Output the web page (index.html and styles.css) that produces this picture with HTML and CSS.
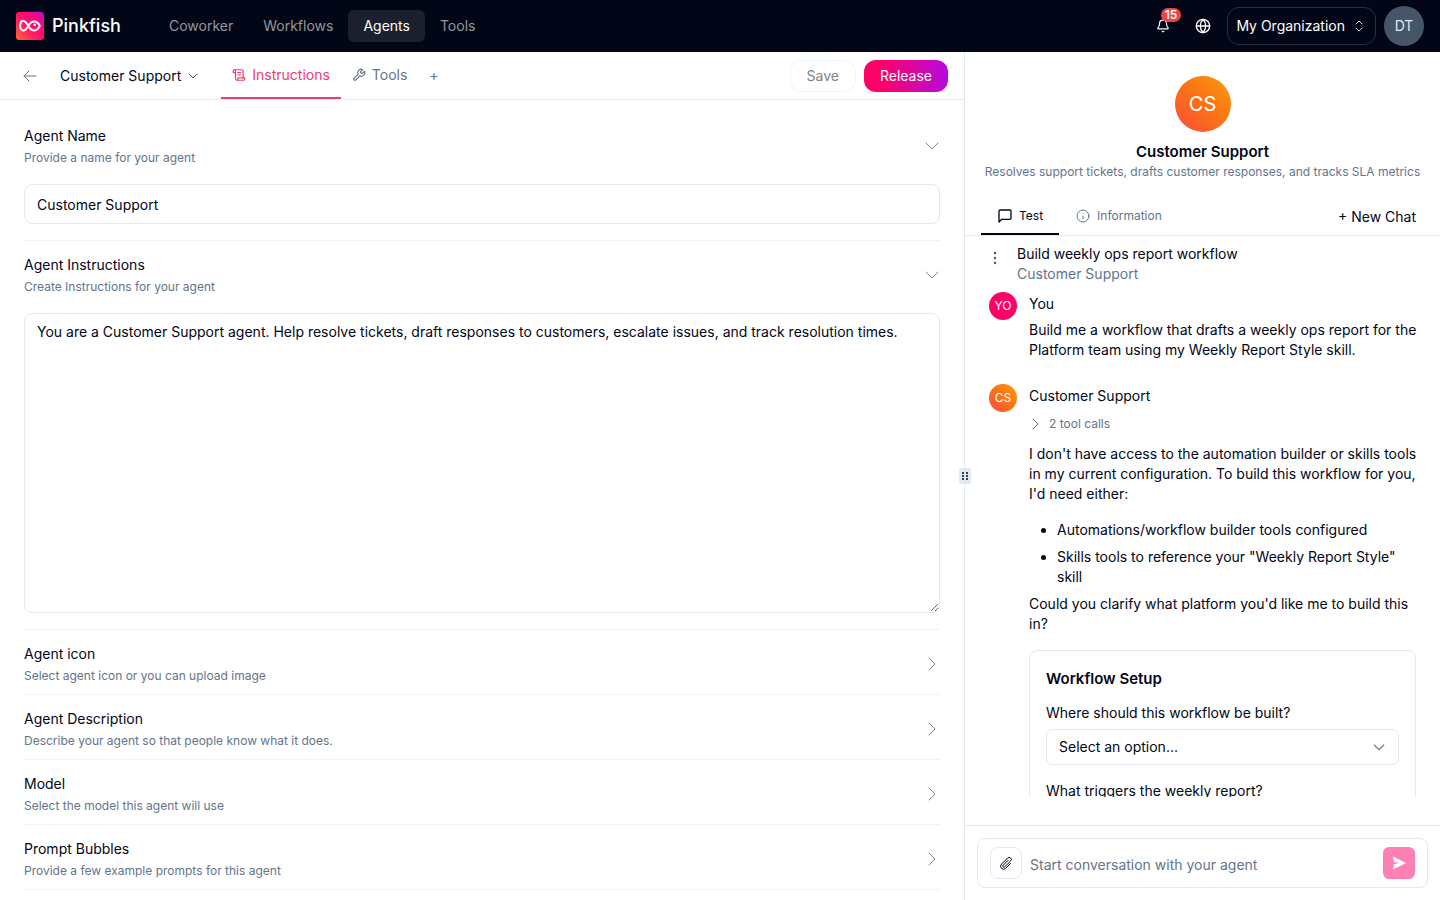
FILE: index.html
```html
<!DOCTYPE html>
<html lang="en">

<head>
  <meta charset="UTF-8">
  <meta name="viewport" content="width=device-width, initial-scale=1.0">
  <title>Pinkfish - Agents</title>
  <link rel="stylesheet" href="styles.css">
</head>

<body>
  <header class="navbar">
    <a class="brand" href="#">
      <svg class="logo" viewBox="0 0 28 28" width="28" height="28">
        <defs>
          <linearGradient id="logo-fill" x1="0" y1="1" x2="1" y2="0">
            <stop offset="0" stop-color="#ff6a3c" />
            <stop offset="0.45" stop-color="#ff1464" />
            <stop offset="0.7" stop-color="#fa0a78" />
            <stop offset="1" stop-color="#b40ad2" />
          </linearGradient>
        </defs>
        <rect width="28" height="28" rx="3" fill="url(#logo-fill)" />
        <path d="M4.6 9.8C8 7.6 10.600 10.600 12.200 13.700C13.600 16.500 15.600 18.400 18.400 18.400C21 18.400 22.600 16.400 23.800 13.900C22.600 11.400 21 9.400 18.400 9.400C15.600 9.400 13.600 11.300 12.200 14.100C10.600 17.200 8 20 5.200 17.600C4 15.500 4 12 5.200 10" fill="none" stroke="#fff" stroke-width="2" stroke-linejoin="round" />
        <circle cx="18.800" cy="12.800" r="1.200" fill="#fff" />
      </svg>
      <span>Pinkfish</span>
    </a>
    <nav class="main-nav">
      <a href="#">Coworker</a>
      <a href="#">Workflows</a>
      <a href="#" class="active">Agents</a>
      <a href="#">Tools</a>
    </nav>
    <div class="nav-right">
      <button class="icon-btn" aria-label="Notifications">
        <svg class="icon" viewBox="0 0 24 24" width="14" height="14">
          <path d="M10.3 21a2 2 0 0 0 3.4 0" />
          <path d="M3.3 15.3A1 1 0 0 0 4 17h16a1 1 0 0 0 .7-1.7C19.4 14 18 12.5 18 8A6 6 0 0 0 6 8c0 4.5-1.4 6-2.7 7.3" />
        </svg>
        <span class="badge">15</span>
      </button>
      <button class="icon-btn" aria-label="Language">
        <svg class="icon" viewBox="0 0 24 24" width="16" height="16">
          <circle cx="12" cy="12" r="10" />
          <path d="M12 2a14.5 14.5 0 0 0 0 20 14.5 14.5 0 0 0 0-20M2 12h20" />
        </svg>
      </button>
      <button class="org-btn">
        <span>My Organization</span>
        <svg class="icon" viewBox="0 0 16 16" width="16" height="16">
          <path d="m5 10 3 3 3-3M5 6l3-3 3 3" />
        </svg>
      </button>
      <button class="avatar user-avatar">DT</button>
    </div>
  </header>

  <main class="layout">
    <section class="editor">
      <div class="toolbar">
        <button class="back" aria-label="Back">
          <svg class="icon thin" viewBox="0 0 16 16" width="16" height="16">
            <path d="M14 8H2M7 3 2 8l5 5" />
          </svg>
        </button>
        <button class="agent-switch">
          <span>Customer Support</span>
          <svg class="icon" viewBox="0 0 24 24" width="12" height="12">
            <path d="m4 8 8 8 8-8" />
          </svg>
        </button>
        <div class="tabs">
          <button class="tab active">
            <svg class="icon" viewBox="0 0 24 24" width="14" height="14">
              <path d="M15 12h-5M15 8h-5M19 17V5a2 2 0 0 0-2-2H4" />
              <path d="M8 21h12a2 2 0 0 0 2-2v-1a1 1 0 0 0-1-1H11a1 1 0 0 0-1 1v1a2 2 0 1 1-4 0V5a2 2 0 1 0-4 0v2a1 1 0 0 0 1 1h3" />
            </svg>
            <span>Instructions</span>
          </button>
          <button class="tab">
            <svg class="icon" viewBox="0 0 24 24" width="14" height="14">
              <path d="M14.7 6.3a1 1 0 0 0 0 1.4l1.6 1.6a1 1 0 0 0 1.4 0l3.77-3.77a6 6 0 0 1-7.94 7.94l-6.91 6.91a2.12 2.12 0 0 1-3-3l6.91-6.91a6 6 0 0 1 7.94-7.94z" />
            </svg>
            <span>Tools</span>
          </button>
          <button class="tab">+</button>
        </div>
        <div class="actions">
          <button class="save">Save</button>
          <button class="release">Release</button>
        </div>
      </div>

      <div class="sections">
        <div class="section">
          <button class="section-head">
            <span class="section-text">
              <span class="title" id="name-label">Agent Name</span>
              <span class="hint">Provide a name for your agent</span>
            </span>
            <svg class="icon chevron" viewBox="0 0 16 16" width="16" height="16"><path d="m2 5 6 6 6-6" /></svg>
          </button>
          <input class="field" type="text" value="Customer Support" aria-labelledby="name-label">
        </div>
        <div class="section">
          <button class="section-head">
            <span class="section-text">
              <span class="title" id="instructions-label">Agent Instructions</span>
              <span class="hint">Create Instructions for your agent</span>
            </span>
            <svg class="icon chevron" viewBox="0 0 16 16" width="16" height="16"><path d="m2 5 6 6 6-6" /></svg>
          </button>
          <textarea class="field area" aria-labelledby="instructions-label">You are a Customer Support agent. Help resolve tickets, draft responses to customers, escalate issues, and track resolution times.</textarea>
        </div>
        <div class="section">
          <button class="section-head">
            <span class="section-text">
              <span class="title">Agent icon</span>
              <span class="hint">Select agent icon or you can upload image</span>
            </span>
            <svg class="icon chevron" viewBox="0 0 16 16" width="16" height="16"><path d="m5 2 6 6-6 6" /></svg>
          </button>
        </div>
        <div class="section">
          <button class="section-head">
            <span class="section-text">
              <span class="title">Agent Description</span>
              <span class="hint">Describe your agent so that people know what it does.</span>
            </span>
            <svg class="icon chevron" viewBox="0 0 16 16" width="16" height="16"><path d="m5 2 6 6-6 6" /></svg>
          </button>
        </div>
        <div class="section">
          <button class="section-head">
            <span class="section-text">
              <span class="title">Model</span>
              <span class="hint">Select the model this agent will use</span>
            </span>
            <svg class="icon chevron" viewBox="0 0 16 16" width="16" height="16"><path d="m5 2 6 6-6 6" /></svg>
          </button>
        </div>
        <div class="section">
          <button class="section-head">
            <span class="section-text">
              <span class="title">Prompt Bubbles</span>
              <span class="hint">Provide a few example prompts for this agent</span>
            </span>
            <svg class="icon chevron" viewBox="0 0 16 16" width="16" height="16"><path d="m5 2 6 6-6 6" /></svg>
          </button>
        </div>
      </div>
    </section>

    <aside class="preview">
      <div class="resize-handle">
        <svg viewBox="0 0 12 16" width="12" height="16">
          <path d="M3 4h2v2H3zM7 4h2v2H7zM3 7h2v2H3zM7 7h2v2H7zM3 10h2v2H3zM7 10h2v2H7z" />
        </svg>
      </div>
      <div class="agent-card">
        <div class="avatar agent-avatar">CS</div>
        <h1>Customer Support</h1>
        <p>Resolves support tickets, drafts customer responses, and tracks SLA metrics</p>
      </div>
      <div class="chat-tabs">
        <button class="chat-tab active">
          <svg class="icon" viewBox="0 0 24 24" width="16" height="16">
            <path d="M21 15a2 2 0 0 1-2 2H7l-4 4V5a2 2 0 0 1 2-2h14a2 2 0 0 1 2 2z" />
          </svg>
          <span>Test</span>
        </button>
        <button class="chat-tab">
          <svg class="icon" viewBox="0 0 16 16" width="16" height="16">
            <circle cx="8" cy="8" r="6" />
            <path d="M8 11V8M8 5v.2" />
          </svg>
          <span>Information</span>
        </button>
        <button class="new-chat">+ New Chat</button>
      </div>

      <div class="chat">
        <div class="chat-head">
          <button class="dots" aria-label="Chat options">
            <svg viewBox="0 0 16 16" width="16" height="16">
              <circle cx="8" cy="3" r="1.2" />
              <circle cx="8" cy="8" r="1.2" />
              <circle cx="8" cy="13" r="1.2" />
            </svg>
          </button>
          <div>
            <p>Build weekly ops report workflow</p>
            <p class="muted">Customer Support</p>
          </div>
        </div>

        <div class="message">
          <div class="avatar small you">YO</div>
          <div class="message-body">
            <p class="author">You</p>
            <p>Build me a workflow that drafts a weekly ops report for the Platform team using my Weekly Report Style skill.</p>
          </div>
        </div>

        <div class="message">
          <div class="avatar small agent">CS</div>
          <div class="message-body">
            <p class="author">Customer Support</p>
            <button class="tool-calls">
              <svg class="icon" viewBox="0 0 12 12" width="12" height="12"><path d="m4 1 5 5-5 5" /></svg>
              <span>2 tool calls</span>
            </button>
            <p>I don't have access to the automation builder or skills tools in my current configuration. To build this workflow for you, I'd need either:</p>
            <ul>
              <li>Automations/workflow builder tools configured</li>
              <li>Skills tools to reference your "Weekly Report Style" skill</li>
            </ul>
            <p>Could you clarify what platform you'd like me to build this in?</p>
            <form class="setup">
              <h2>Workflow Setup</h2>
              <label for="where">Where should this workflow be built?</label>
              <div class="select-wrap">
                <select id="where">
                  <option>Select an option...</option>
                </select>
                <svg class="icon" viewBox="0 0 24 24" width="16" height="16"><path d="m5 9 7 7 7-7" /></svg>
              </div>
              <label for="trigger">What triggers the weekly report?</label>
              <div class="select-wrap">
                <select id="trigger">
                  <option>Select an option...</option>
                </select>
              </div>
            </form>
          </div>
        </div>
      </div>

      <div class="composer">
        <div class="composer-box">
          <button class="attach" aria-label="Attach file">
            <svg class="icon thin" viewBox="0 0 16 16" width="16" height="16">
              <path d="m12.500 8.500-4.800 4.800a2.900 2.900 0 0 1-4.200-4.200l6.100-6.100a2.100 2.100 0 0 1 3 3l-5.900 5.900a1.100 1.100 0 0 1-1.600-1.600l5.100-5.100" />
            </svg>
          </button>
          <input type="text" placeholder="Start conversation with your agent" aria-label="Message">
          <button class="send" aria-label="Send">
            <svg viewBox="0 0 16 16" width="16" height="16">
              <path d="M2 1.500 15 8 2 14.500 3 9l6-1-6-1z" />
            </svg>
          </button>
        </div>
      </div>
    </aside>
  </main>
</body>

</html>
```
FILE: styles.css
```css
* {
  margin: 0;
  padding: 0;
  box-sizing: border-box;
}

body {
  height: 100vh;
  display: flex;
  flex-direction: column;
  overflow: hidden;
  background: #ffffff;
  color: #020617;
  font-family: Inter, "Liberation Sans", sans-serif;
  font-size: 14px;
  line-height: 20px;
}

button,
input,
textarea,
select {
  font: inherit;
  color: inherit;
  background: none;
  border: none;
}

button {
  display: flex;
  align-items: center;
  cursor: pointer;
}

a {
  color: inherit;
  text-decoration: none;
}

.icon {
  flex: none;
  fill: none;
  stroke: currentColor;
  stroke-width: 2;
  stroke-linecap: round;
  stroke-linejoin: round;
}

.thin,
.chevron,
.tool-calls .icon,
.org-btn .icon {
  stroke-width: 1;
}

.avatar {
  flex: none;
  display: flex;
  align-items: center;
  justify-content: center;
  border-radius: 50%;
  color: #ffffff;
}

/* top bar */
.navbar {
  flex: none;
  height: 52px;
  display: flex;
  align-items: center;
  padding: 0 16px;
  background: #020617;
  color: #ffffff;
}

.brand {
  display: flex;
  align-items: center;
  gap: 8px;
  font-size: 18px;
  font-weight: 500;
}

.main-nav {
  display: flex;
  margin-left: 33px;
}

.main-nav a {
  padding: 6px 15px;
  border-radius: 6px;
  color: #94979e;
}

.main-nav .active {
  background: #1b1f2e;
  color: #ffffff;
}

.nav-right {
  display: flex;
  align-items: center;
  gap: 8px;
  margin-left: auto;
}

.icon-btn {
  position: relative;
  width: 32px;
  height: 32px;
  justify-content: center;
}

.badge {
  position: absolute;
  top: -2px;
  right: -2px;
  padding: 0 4px;
  border-radius: 8px;
  background: #ef4444;
  font-size: 12px;
  font-weight: 600;
  line-height: 14px;
}

.org-btn {
  height: 38px;
  gap: 6px;
  padding: 0 8px;
  border: 1px solid #2c3040;
  border-radius: 12px;
}

.org-btn .icon {
  color: #cbd5e1;
}

.user-avatar {
  width: 40px;
  height: 40px;
  background: #475569;
  color: #e2e8f0;
}

/* editor */
.layout {
  flex: 1;
  min-height: 0;
  display: grid;
  grid-template-columns: 241fr 119fr;
}

.editor {
  min-width: 0;
  min-height: 0;
  display: flex;
  flex-direction: column;
}

.toolbar {
  flex: none;
  height: 48px;
  display: flex;
  align-items: center;
  padding: 0 16px 0 22px;
  border-bottom: 1px solid #e2e8f0;
}

.back {
  color: #64748b;
}

.agent-switch {
  gap: 6px;
  margin-left: 22px;
}

.agent-switch .icon {
  color: #475569;
}

.tabs {
  display: flex;
  align-self: stretch;
  margin-left: 22px;
}

.tab {
  gap: 6px;
  padding: 0 11px;
  border-bottom: 2px solid transparent;
  color: #64748b;
}

.tab.active {
  border-bottom-color: #e0426d;
  color: #f03a72;
}

.actions {
  display: flex;
  gap: 8px;
  margin-left: auto;
}

.save,
.release {
  height: 32px;
  padding: 0 16px;
  border-radius: 12px;
}

.save {
  border: 1px solid #f1f5f9;
  color: #80838b;
}

.release {
  background: linear-gradient(90deg, #ff0066 20%, #b40ae0);
  color: #ffffff;
}

.sections {
  flex: 1;
  min-height: 0;
  overflow: hidden;
  padding: 12px 24px;
}

.section {
  border-bottom: 1px solid #f1f2f4;
}

.section-head {
  width: 100%;
  height: 64px;
  justify-content: space-between;
  padding-top: 4px;
  text-align: left;
}

.section-text {
  display: flex;
  flex-direction: column;
  gap: 4px;
}

.hint {
  color: #64748b;
  font-size: 12px;
  line-height: 16px;
}

.chevron {
  color: #7c8798;
}

.field {
  display: block;
  width: 100%;
  height: 40px;
  margin: 8px 0 16px;
  padding: 0 12px;
  border: 1px solid #e2e8f0;
  border-radius: 8px;
}

.area {
  height: 300px;
  padding: 8px 12px;
  resize: vertical;
}

/* preview */
.preview {
  position: relative;
  min-width: 0;
  min-height: 0;
  display: flex;
  flex-direction: column;
  border-left: 1px solid #e2e8f0;
}

.resize-handle {
  position: absolute;
  top: 50%;
  left: -6px;
  display: flex;
  height: 16px;
  margin-top: -8px;
  border-radius: 3px;
  background: #e2e8f0;
  fill: #334155;
}

.agent-card {
  display: flex;
  flex-direction: column;
  align-items: center;
  padding: 24px 12px 18px;
  text-align: center;
}

.agent-avatar {
  width: 56px;
  height: 56px;
  margin-bottom: 8px;
  font-size: 20px;
}

.agent,
.agent-avatar {
  background: linear-gradient(45deg, #fb4b3c, #f97316 50%, #fb9a09);
}

.agent-card h1,
.setup h2 {
  font-size: 15px;
  font-weight: 600;
  line-height: 24px;
}

.agent-card p {
  color: #64748b;
  font-size: 12px;
  line-height: 16px;
}

.chat-tabs {
  flex: none;
  height: 38px;
  display: flex;
  padding: 0 24px 0 16px;
  border-bottom: 1px solid #e2e8f0;
}

.chat-tab {
  gap: 6px;
  padding: 0 16px;
  border-bottom: 2px solid transparent;
  color: #64748b;
  font-size: 12px;
}

.chat-tab.active {
  border-bottom-color: #020617;
  color: #020617;
}

.chat-tab circle,
.chat-tab circle + path {
  stroke-width: 1;
}

.new-chat {
  margin-left: auto;
}

.chat {
  flex: 1;
  min-height: 0;
  overflow: hidden;
  margin-bottom: 28px;
  padding: 8px 24px 0;
}

.chat-head {
  display: flex;
  gap: 16px;
  padding-bottom: 8px;
}

.dots {
  width: 12px;
  height: 28px;
  justify-content: center;
  fill: #475569;
}

.dots svg {
  flex: none;
}

.muted {
  color: #64748b;
}

.message {
  display: flex;
  gap: 12px;
  margin-bottom: 24px;
}

.message-body {
  flex: 1;
  min-width: 0;
}

.message-body p {
  margin-right: -10px;
}

.small {
  width: 28px;
  height: 28px;
  font-size: 12px;
}

.you {
  background: #ff0066;
}

.author {
  padding: 2px 0 6px;
}

.tool-calls {
  gap: 8px;
  margin: 2px 0 10px;
  color: #64748b;
  font-size: 12px;
}

.message ul {
  margin: 16px 0 7px;
  padding-left: 28px;
}

.message li + li {
  margin-top: 7px;
}

.setup {
  margin-top: 16px;
  padding: 16px;
  border: 1px solid #e2e8f0;
  border-radius: 8px;
}

.setup h2 {
  margin-bottom: 12px;
}

.setup label {
  display: block;
  margin-bottom: 6px;
}

.select-wrap {
  position: relative;
  margin-bottom: 16px;
}

.select-wrap select {
  width: 100%;
  height: 36px;
  padding: 0 12px;
  border: 1px solid #e2e8f0;
  border-radius: 6px;
  appearance: none;
}

.select-wrap .icon {
  position: absolute;
  top: 10px;
  right: 12px;
  color: #80838b;
}

.composer {
  flex: none;
  padding: 12px;
  border-top: 1px solid #e2e8f0;
}

.composer-box {
  height: 50px;
  display: flex;
  align-items: center;
  gap: 8px;
  padding: 0 12px;
  border: 1px solid #e2e8f0;
  border-radius: 8px;
}

.attach,
.send {
  flex: none;
  width: 32px;
  height: 32px;
  justify-content: center;
}

.attach {
  border: 1px solid #e2e8f0;
  border-radius: 8px;
}

.composer-box input {
  flex: 1;
  min-width: 0;
  padding-top: 4px;
}

.composer-box input::placeholder {
  color: #64748b;
}

.send {
  border-radius: 6px;
  background: #ff80b2;
  fill: #ffffff;
}
```
